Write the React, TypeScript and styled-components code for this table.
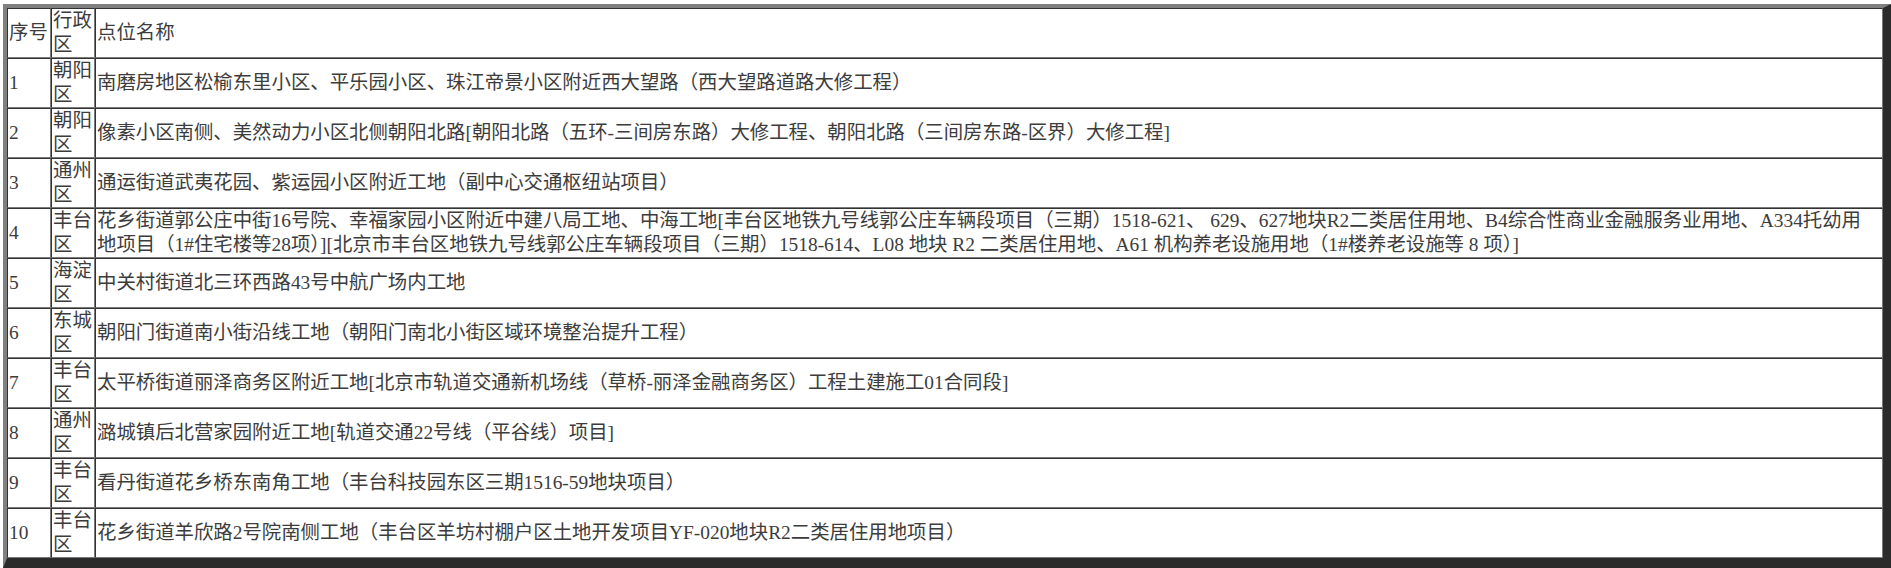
import styled, { createGlobalStyle } from 'styled-components'

const GlobalStyle = createGlobalStyle`
  html, body {
    margin: 0;
    padding: 0;
    background: #ffffff;
    overflow: hidden;
  }
  body {
    padding: 4px 0 0 3px;
  }
`

const rows: [string, string, string][] = [
  ['1', '朝阳区', '南磨房地区松榆东里小区、平乐园小区、珠江帝景小区附近西大望路（西大望路道路大修工程）'],
  ['2', '朝阳区', '像素小区南侧、美然动力小区北侧朝阳北路[朝阳北路（五环-三间房东路）大修工程、朝阳北路（三间房东路-区界）大修工程]'],
  ['3', '通州区', '通运街道武夷花园、紫运园小区附近工地（副中心交通枢纽站项目）'],
  [
    '4',
    '丰台区',
    '花乡街道郭公庄中街16号院、幸福家园小区附近中建八局工地、中海工地[丰台区地铁九号线郭公庄车辆段项目（三期）1518-621、 629、627地块R2二类居住用地、B4综合性商业金融服务业用地、A334托幼用地项目（1#住宅楼等28项）][北京市丰台区地铁九号线郭公庄车辆段项目（三期）1518-614、L08 地块 R2 二类居住用地、A61 机构养老设施用地（1#楼养老设施等 8 项）]',
  ],
  ['5', '海淀区', '中关村街道北三环西路43号中航广场内工地'],
  ['6', '东城区', '朝阳门街道南小街沿线工地（朝阳门南北小街区域环境整治提升工程）'],
  ['7', '丰台区', '太平桥街道丽泽商务区附近工地[北京市轨道交通新机场线（草桥-丽泽金融商务区）工程土建施工01合同段]'],
  ['8', '通州区', '潞城镇后北营家园附近工地[轨道交通22号线（平谷线）项目]'],
  ['9', '丰台区', '看丹街道花乡桥东南角工地（丰台科技园东区三期1516-59地块项目）'],
  ['10', '丰台区', '花乡街道羊欣路2号院南侧工地（丰台区羊坊村棚户区土地开发项目YF-020地块R2二类居住用地项目）'],
]

const SiteTable = styled.table`
  box-sizing: border-box;
  width: 1888px;
  table-layout: fixed;
  border-collapse: separate;
  border-spacing: 0;
  border-style: solid;
  border-width: 4px 8px 10px 4px;
  border-color: #808080 #2b2b2b #2b2b2b #808080;
  font-family: 'Liberation Serif', 'Noto Sans CJK SC', serif;
  font-size: 19.4px;
  line-height: 24px;
  color: #3c3c3c;
`

const Cell = styled.td<{ w?: number; padRight?: number }>`
  box-sizing: border-box;
  ${(p) => (p.w ? `width: ${p.w}px;` : '')}
  padding: 0 ${(p) => p.padRight ?? 1}px 0 1px;
  border-style: solid;
  border-width: 1px;
  border-color: #333333 #7a7a7a #7a7a7a #333333;
  vertical-align: middle;
  text-align: left;
  word-break: normal;
`

export default function App() {
  return (
    <>
      <GlobalStyle />
      <SiteTable>
        <tbody>
          <tr>
            <Cell w={44}>序号</Cell>
            <Cell w={44}>行政区</Cell>
            <Cell padRight={10}>点位名称</Cell>
          </tr>
          {rows.map(([no, district, name]) => (
            <tr key={no}>
              <Cell>{no}</Cell>
              <Cell>{district}</Cell>
              <Cell padRight={10}>{name}</Cell>
            </tr>
          ))}
        </tbody>
      </SiteTable>
    </>
  )
}
